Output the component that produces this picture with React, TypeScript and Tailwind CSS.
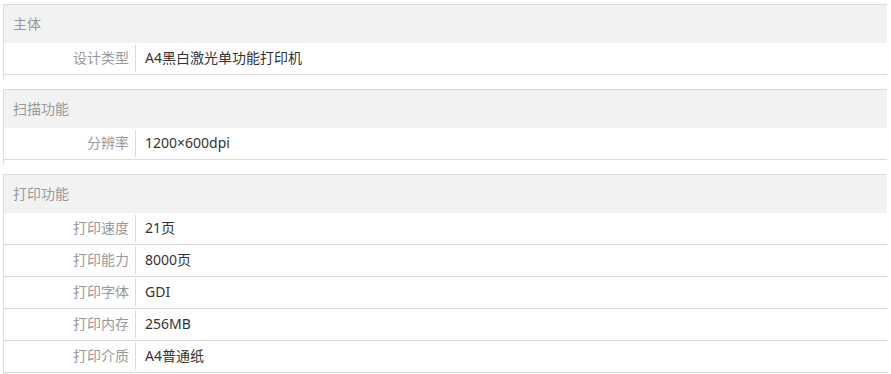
const sections: { title: string; rows: [string, string][] }[] = [
  { title: '主体', rows: [['设计类型', 'A4黑白激光单功能打印机']] },
  { title: '扫描功能', rows: [['分辨率', '1200×600dpi']] },
  {
    title: '打印功能',
    rows: [
      ['打印速度', '21页'],
      ['打印能力', '8000页'],
      ['打印字体', 'GDI'],
      ['打印内存', '256MB'],
      ['打印介质', 'A4普通纸'],
    ],
  },
];

export default function App() {
  return (
    <div
      className="w-[891px] h-[374px] overflow-hidden bg-white pt-[4px] pl-[3px] pr-[4px] text-[14px]"
      style={{ fontFamily: '"Noto Sans", "Noto Sans CJK SC", sans-serif' }}
    >
      {sections.map((s) => (
        <div key={s.title} className="mb-[9px] border-l border-t border-[#dcdcdc] pb-[5px]">
          <div className="flex h-[38px] items-center bg-[#f2f2f2] pb-[2px] pl-[9px] text-[#999999]">{s.title}</div>
          {s.rows.map(([k, v]) => (
            <div key={k} className="flex h-[32px] border-b border-[#dcdcdc]">
              <div className="my-[2px] flex w-[132px] items-center justify-end border-r border-[#dcdcdc] pb-[2px] pr-[6px] text-[#999999]">
                {k}
              </div>
              <div className="flex items-center pb-[3px] pl-[9px] text-[#333333]">{v}</div>
            </div>
          ))}
        </div>
      ))}
    </div>
  );
}
